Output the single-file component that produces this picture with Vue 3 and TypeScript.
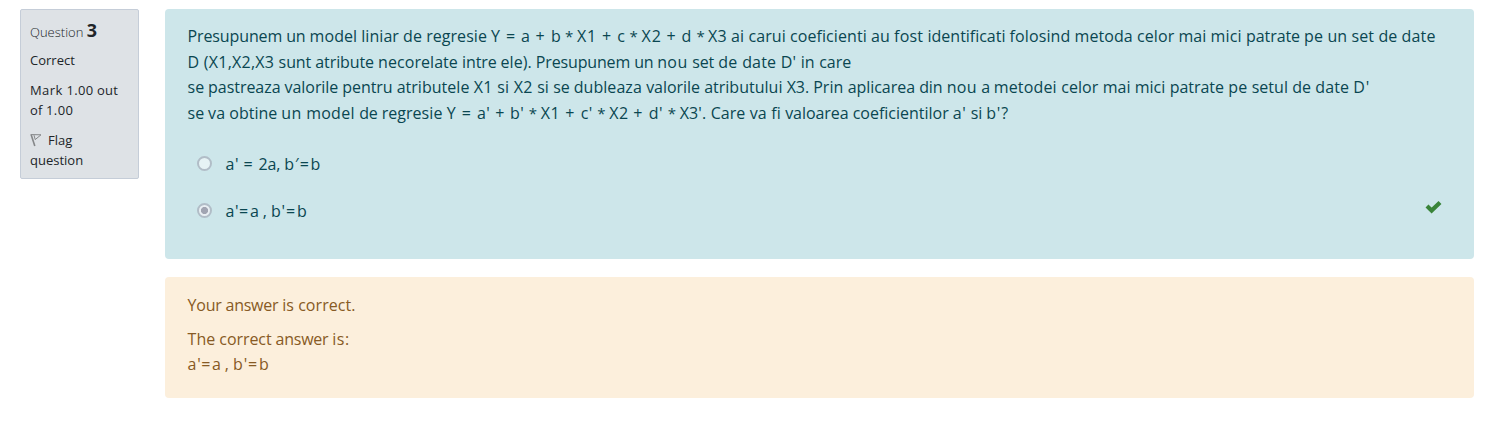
<script setup lang="ts">
import type { Directive } from 'vue'

// A run of text: its words, and the width in pixels that it takes up.
interface Word {
  text: string
  width: number
}

interface Answer {
  words: Word[]
  selected: boolean
}

// Splits a line into words and pairs each one with the distance between tab stops.
function setLine(text: string, stops: number[]): Word[] {
  const parts = text.split('|')
  return parts.map((part, i) => ({ text: part, width: stops[i + 1] - stops[i] }))
}

// Tracks a word so that it takes up exactly the given width.
const vFit: Directive<HTMLElement, number> = {
  mounted(el, { value }) {
    const natural = el.getBoundingClientRect().width
    const count = el.textContent?.length ?? 1
    el.style.letterSpacing = `${(value - natural) / count}px`
  },
}

const questionLines: Word[][] = [
  setLine(
    'Presupunem un |model liniar de regresie |Y |= |a |+ |b |* |X1 |+ |c |* |X2 |+ |d |* |X3 |ai carui coeficienti |au |fost |identificati |folosind |metoda |celor mai |mici |patrate |pe un |set de |date',
    [187, 309, 490.5, 505.3, 520.5, 535, 550.3, 564.3, 576.5, 601.3, 616.7, 628.8, 641, 666, 681, 695.8, 707.5, 730.5, 870.5, 893.5, 927, 1009, 1074, 1136.5, 1210, 1245.5, 1303.5, 1351, 1401, 1435],
  ),
  setLine(
    "D (X1,X2,X3 |sunt atribute |necorelate |intre |ele). |Presupunem |un |nou |set |de |date |D' |in |care",
    [187, 278, 377.5, 461.5, 500, 535.2, 633.5, 656.5, 691.5, 717.5, 741.5, 780, 800, 818.5, 850.5],
  ),
  setLine(
    "se |pastreaza |valorile |pentru |atributele |X1 |si |X2 |si |se |dubleaza |valorile |atributului |X3. |Prin |aplicarea |din |nou |a |metodei |celor |mai |mici |patrate |pe |setul |de |date |D'",
    [187, 207.5, 284, 341.7, 396, 473, 496.5, 513, 536.5, 552.5, 573, 645.5, 703.5, 786, 812.5, 847, 918.5, 946, 980.7, 993, 1060.5, 1102, 1134, 1169, 1227.5, 1251, 1291.5, 1314.7, 1352.5, 1369.5],
  ),
  setLine(
    "se |va |obtine |un |model |de |regresie |Y |= |a' |+ |b' |* |X1 |+ |c' |* |X2 |+ |d' |* |X3'. |Care |va |fi |valoarea |coeficientilor |a' |si |b'?",
    [187, 207.5, 228.7, 280.7, 305.5, 358.5, 381, 446, 461, 476.3, 494.5, 509.3, 528, 540, 564.7, 580, 596.7, 608.5, 632.7, 648, 667, 679, 710, 749, 770.5, 784.5, 852, 952.2, 970, 985.5, 1008.5],
  ),
]

const answers: Answer[] = [
  { words: setLine("a' |= |2a, |b′|=|b", [225, 242.8, 258, 283.7, 299.2, 310, 321]), selected: false },
  { words: setLine("a'|=|a , |b'|=|b", [225, 238.5, 249.3, 270.3, 285.5, 296.3, 307]), selected: true },
]

const feedback: Word[][] = [
  setLine('Your |answer |is |correct.', [187, 225, 281.5, 297.5, 355]),
  setLine('The |correct |answer |is:', [187, 218.7, 275, 331.7, 349]),
  setLine("a'|=|a , |b'|=|b", [187, 200.7, 211.3, 232.3, 247.5, 258.3, 269]),
]

const grade: Word[][] = [
  setLine('Mark |1.00 |out', [30, 66.5, 97, 118.3]),
  setLine('of |1.00', [30, 46, 73.3]),
]
</script>

<template>
  <main class="question">
    <aside class="info">
      <h3 class="number"><span>Question</span> <b>3</b></h3>
      <div class="state">Correct</div>
      <div class="grade">
        <div v-for="(line, i) in grade" :key="i" class="line">
          <span v-for="(word, j) in line" :key="j" v-fit="word.width">{{ word.text }}</span>
        </div>
      </div>
      <div class="flag">
        <svg class="flag-icon" width="12" height="14" viewBox="0 0 12 14" fill="none" stroke="#858789">
          <path d="M1 1.2 4.8 13" stroke-width="1.6" />
          <path d="M1.5 1.6 11 1.8 5.2 6.6M4 2.2 5.2 6.6" stroke-width="1" />
        </svg><span>Flag</span><br>question
      </div>
    </aside>
    <div class="content">
      <section class="formulation">
        <div class="text">
          <div v-for="(line, i) in questionLines" :key="i" class="line">
            <span v-for="(word, j) in line" :key="j" v-fit="word.width" :class="{ star: word.text === '* ' }">{{ word.text }}</span>
          </div>
        </div>
        <div v-for="(answer, i) in answers" :key="i" class="answer">
          <span class="radio" :class="{ selected: answer.selected }"></span>
          <div class="line">
            <span v-for="(word, j) in answer.words" :key="j" v-fit="word.width">{{ word.text }}</span>
          </div>
          <svg v-if="answer.selected" class="check" width="17" height="14" viewBox="0 0 17 14">
            <path d="M2 6.1 6.6 10.6 15 2.4" fill="none" stroke="#398439" stroke-width="4.2" />
          </svg>
        </div>
      </section>
      <section class="feedback">
        <div v-for="(line, i) in feedback" :key="i" class="line">
          <span v-for="(word, j) in line" :key="j" v-fit="word.width">{{ word.text }}</span>
        </div>
      </section>
    </div>
  </main>
</template>

<style>
body {
  margin: 0;
  background: #fff;
}
</style>

<style scoped>
.question {
  display: flex;
  align-items: flex-start;
  gap: 26px;
  padding: 9px 19px 0 20px;
  font-family: "Open Sans", "Noto Sans", sans-serif;
  font-size: 16px;
  line-height: 25.6px;
}

.line {
  display: flex;
  white-space: pre;
}

.star {
  font-size: 15px;
}

.info {
  box-sizing: border-box;
  width: 119px;
  height: 170px;
  padding: 10px 9px 0;
  border: 1px solid #c5cdd8;
  border-radius: 2px;
  background: #dee2e6;
  color: #212529;
  font-size: 13px;
  line-height: 20px;
  white-space: nowrap;
}

.number {
  margin: 0 0 8px;
  font-size: 13px;
  font-weight: 300;
  line-height: 20px;
}

.number b {
  font-size: 18px;
  font-weight: 700;
  line-height: 20px;
}

.state,
.grade {
  margin-bottom: 10px;
}

.flag-icon {
  margin-right: 6px;
  vertical-align: -2px;
}

.content {
  flex: 1;
  min-width: 0;
}

.formulation {
  box-sizing: border-box;
  height: 250px;
  padding: 15px 22px 0 22.6px;
  border-radius: 4px;
  background: #cde6ea;
  color: #0a4651;
}

.text {
  margin-bottom: 25px;
}

.answer {
  display: flex;
  align-items: center;
  height: 26px;
  margin-bottom: 21px;
  padding-left: 9.4px;
}

.radio {
  box-sizing: border-box;
  width: 15px;
  height: 15px;
  margin: -2px 13.6px 0 0;
  border: 2px solid #b1bdc7;
  border-radius: 50%;
  background: #e6f3f5;
}

.radio.selected {
  background: radial-gradient(circle, #a1a5b2 3.2px, #e9eff3 3.9px);
}

.check {
  margin: -9px 10px 0 auto;
}

.feedback {
  box-sizing: border-box;
  height: 121px;
  margin-top: 18px;
  padding: 16px 22px 0 22.6px;
  border-radius: 4px;
  background: #fcefdc;
  color: #875a24;
}

.feedback .line:first-child {
  margin-bottom: 8px;
}
</style>
